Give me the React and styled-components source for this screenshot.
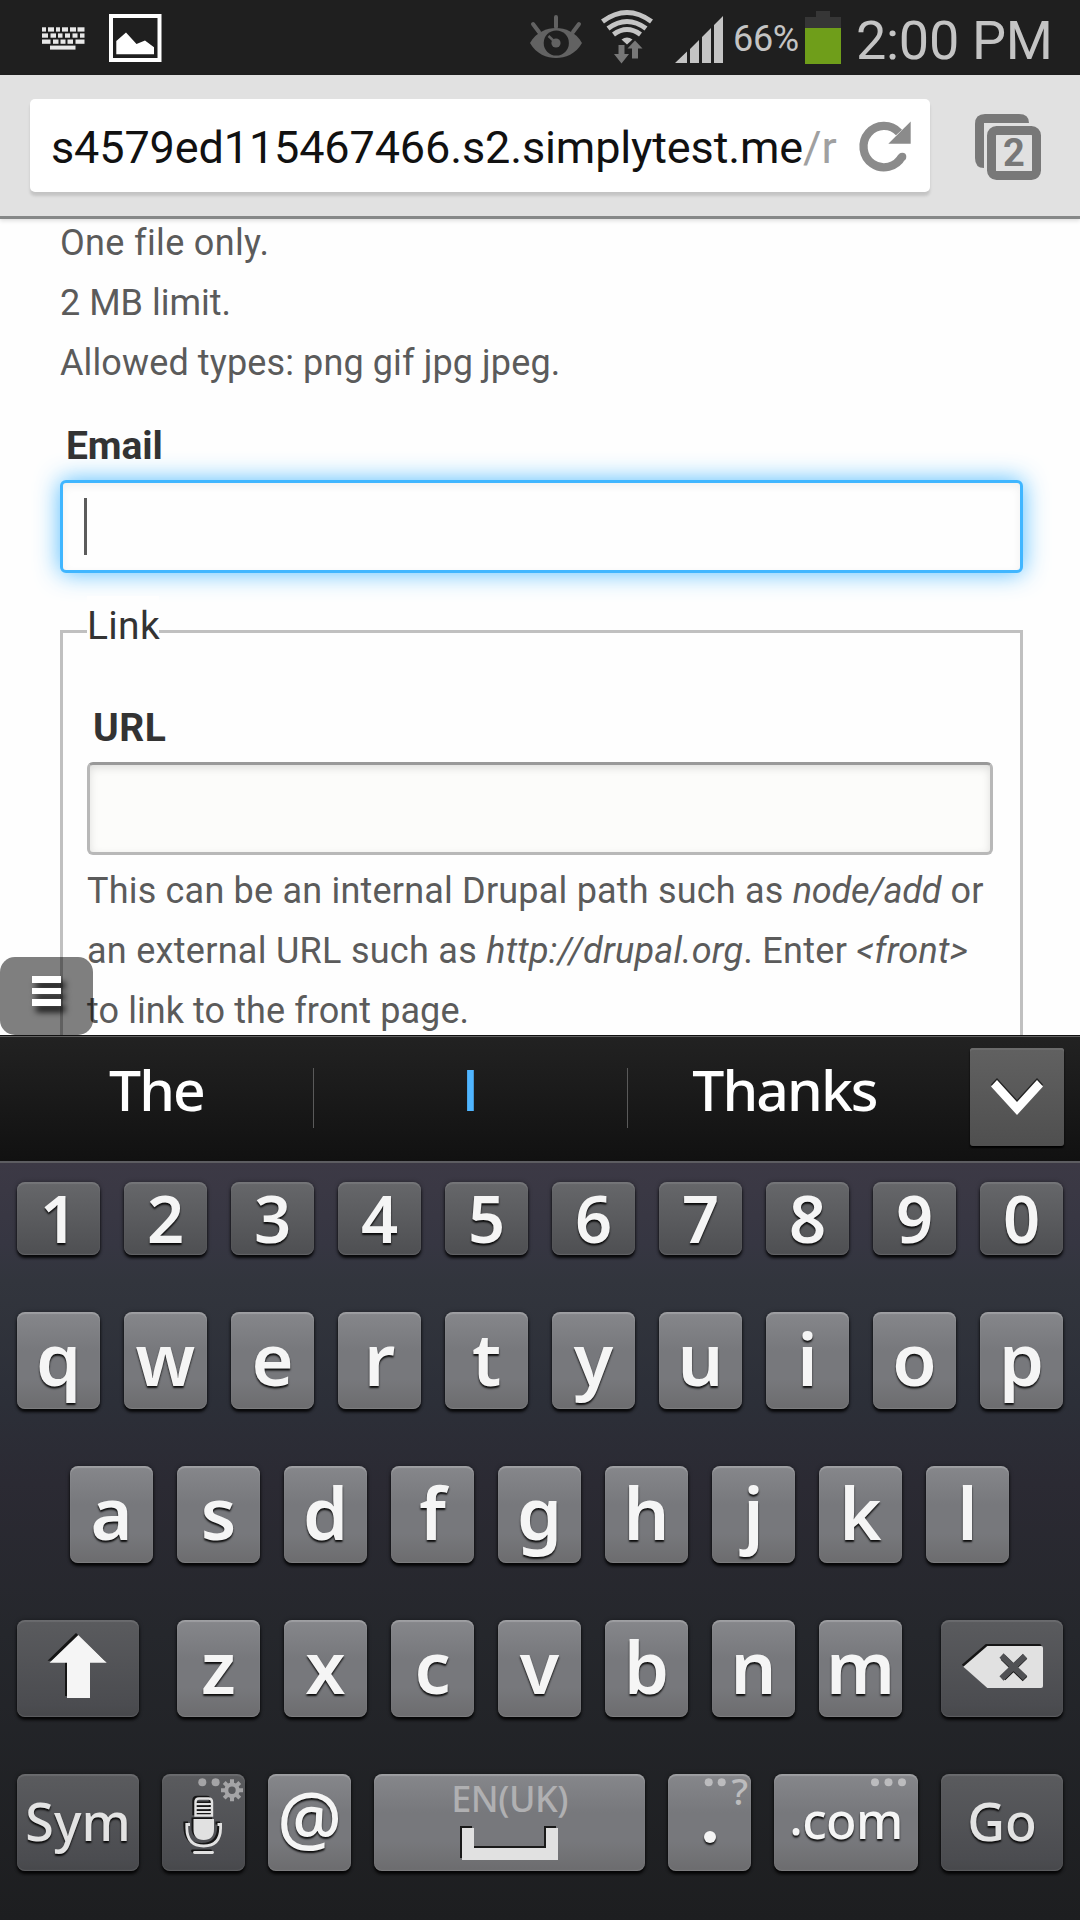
import React from "react";
import styled, { createGlobalStyle, css } from "styled-components";

const Global = createGlobalStyle`
  html, body { margin: 0; padding: 0; background: #fefefe; }
  * { box-sizing: border-box; }
`;

const Screen = styled.div`
  position: relative;
  width: 1080px;
  height: 1920px;
  overflow: hidden;
  display: flex;
  flex-direction: column;
  background: #fefefe;
  font-family: Roboto, "Liberation Sans", sans-serif;
`;

/* ---------- status bar ---------- */
const StatusBar = styled.div`
  height: 75px;
  flex: none;
  background: #1f1f1f;
  display: flex;
  align-items: flex-start;
  justify-content: space-between;
  color: #c4c4c4;
`;
const StatusGroup = styled.div`
  display: flex;
  height: 75px;
`;
const Percent = styled.span`
  width: 72px;
  font-size: 36px;
  line-height: 79px;
  letter-spacing: -0.3px;
  white-space: nowrap;
`;
const Clock = styled.span`
  width: 225px;
  padding-left: 1px;
  font-size: 54px;
  line-height: 81px;
  letter-spacing: -0.3px;
  white-space: nowrap;
`;

/* ---------- browser toolbar ---------- */
const Toolbar = styled.div`
  position: relative;
  z-index: 1;
  height: 144px;
  flex: none;
  display: flex;
  background: #e1e1e1;
  border-bottom: 3px solid #868888;
  box-shadow: 0 2px 4px rgba(0, 0, 0, 0.12);
  padding: 24px 0 0 30px;
`;
const AddressBox = styled.div`
  width: 900px;
  height: 93px;
  border-radius: 5px;
  background: #fff;
  box-shadow: 0 4px 3px rgba(0, 0, 0, 0.13);
  display: flex;
`;
const Address = styled.div`
  width: 811px;
  padding: 2px 0 0 21px;
  font-size: 45px;
  line-height: 93px;
  letter-spacing: -0.13px;
  white-space: nowrap;
  color: #111;
`;
const AddressPath = styled.span`
  color: #a0a0a0;
`;
const TabCount = styled.div`
  display: flex;
  padding-left: 40px;
`;

/* ---------- page ---------- */
const Page = styled.main`
  height: 816px;
  flex: none;
  overflow: hidden;
  padding: 0 57px 0 60px;
`;
const Description = styled.div`
  margin-top: ${(p) => p.$top}px;
  font-size: 36px;
  line-height: 60px;
  color: #5b5b5b;
  white-space: nowrap;
`;
const Line = styled.div`
  letter-spacing: ${(p) => p.$track || 0}px;
`;
const Term = styled.em`
  letter-spacing: ${(p) => p.$track || 0}px;
`;
const Label = styled.label`
  display: block;
  margin-top: ${(p) => p.$top}px;
  padding-left: 6px;
  margin-bottom: 4px;
  font-size: 39px;
  line-height: 60px;
  font-weight: 700;
  letter-spacing: ${(p) => p.$track}px;
  color: #333;
`;
const Field = styled.div`
  height: 93px;
  border: 3px solid #b8b8b8;
  border-top-color: #999;
  border-radius: 6px;
  background: #fcfcfa;
  box-shadow: inset 0 3px 9px rgba(0, 0, 0, 0.12);
  padding: 15px 21px;
  ${(p) =>
    p.$focused &&
    css`
      border-color: #40b6ff;
      background: #fefefe;
      box-shadow: 0 0 24px rgba(64, 182, 255, 0.9), inset 0 3px 9px rgba(0, 0, 0, 0.06);
    `}
`;
const Caret = styled.div`
  width: 3px;
  height: 57px;
  background: #5c5c5c;
`;
const FieldGroup = styled.section`
  margin-top: 57px;
  height: 500px;
  border: 3px solid #c0c0c0;
  padding: 0 27px 0 24px;
`;
const Legend = styled.div`
  width: 72px;
  margin-top: -37px;
  background: #fefefe;
  font-size: 39px;
  line-height: 60px;
  letter-spacing: 0.3px;
  color: #333;
`;
const MenuHandle = styled.button`
  position: absolute;
  left: 0;
  top: 957px;
  width: 93px;
  height: 78px;
  border: 0;
  border-radius: 15px;
  background: rgba(0, 0, 0, 0.5);
  padding: 19px 32px;
  display: flex;
  flex-direction: column;
  gap: 5px;
`;
const MenuBar = styled.i`
  width: 29px;
  height: 6.6px;
  background: #fff;
  box-shadow: 4px 6px 6px rgba(0, 0, 0, 0.85);
`;

/* ---------- keyboard ---------- */
const Suggestions = styled.div`
  height: 128px;
  flex: none;
  display: flex;
  border-top: 1px solid #111;
  border-bottom: 2px solid #5d5d61;
  box-shadow: inset 0 1px 0 #626262;
  background: linear-gradient(#222, #111);
`;
const Suggestion = styled.div`
  width: ${(p) => p.$w}px;
  text-align: center;
  font-family: ${(p) => (p.$active ? `"Open Sans"` : `"Noto Sans"`)}, sans-serif;
  font-size: 57px;
  font-weight: ${(p) => (p.$active ? 600 : 530)};
  line-height: 107px;
  letter-spacing: ${(p) => p.$track || 0}px;
  color: ${(p) => (p.$active ? "#4fb5ff" : "#fff")};
`;
const Divider = styled.div`
  width: 1px;
  height: 60px;
  margin-top: 32px;
  background: #5a5a5a;
`;
const Collapse = styled.button`
  width: 94px;
  height: 98px;
  margin: 12px 16px 0 auto;
  padding: 0;
  border: 0;
  border-radius: 3px;
  background: linear-gradient(#616161, #4f4f4f);
  box-shadow: inset 0 2px 0 #6b6b6b, 0 2px 2px #000;
`;
const ChevronIcon = styled.svg`
  display: block;
`;
const Keyboard = styled.div`
  flex: 1;
  display: flex;
  flex-direction: column;
  gap: 57px;
  padding: 19px 17px 0;
  background: linear-gradient(#3c3945 0, #363642 80px, #32353d 118px, #2c2f38 240px, #2b2a33 320px, #25272c 470px, #1d1e20 757px);
  font-family: "Noto Sans", "Open Sans", sans-serif;
`;
const KeyRow = styled.div`
  display: flex;
  gap: ${(p) => p.$gap || 24}px;
  padding-left: ${(p) => p.$indent || 0}px;
`;
const tones = {
  light: "linear-gradient(#86878b, #77787c 40%, #77787c 70%, #6c6c6e)",
  number: "linear-gradient(#66676a, #4e4f52)",
  dark: "linear-gradient(#5a5b5e, #4b4c50 88%, #47484b)",
};
const KeyCap = styled.div`
  position: relative;
  flex: none;
  width: ${(p) => p.$w || 83}px;
  height: ${(p) => p.$h || 97}px;
  margin: ${(p) => p.$margin || "0"};
  border-radius: 8px;
  background: ${(p) => tones[p.$tone || "light"]};
  box-shadow: inset 0 2px 1px rgba(255, 255, 255, ${(p) => (p.$tone ? 0.1 : 0.2)}),
    inset 0 -1px 1px rgba(255, 255, 255, 0.12), 0 3px 3px rgba(0, 0, 0, 0.85), 0 0 4px rgba(0, 0, 0, 0.35);
  display: flex;
  justify-content: center;
  white-space: nowrap;
  color: ${(p) => (p.$tone === "dark" ? "#e3e3e3" : "#f5f5f5")};
  font-size: ${(p) => p.$size || 72}px;
  font-weight: ${(p) => p.$weight || 560};
  line-height: ${(p) => p.$line || 93}px;
  letter-spacing: ${(p) => p.$track || 0}px;
  text-shadow: 0 2px 2px rgba(0, 0, 0, 0.9);
`;
const Hint = styled.span`
  position: absolute;
  right: ${(p) => p.$right}px;
  top: ${(p) => p.$top}px;
  font-size: ${(p) => p.$size || 36}px;
  line-height: 36px;
  font-weight: 500;
  letter-spacing: ${(p) => p.$track || 0}px;
  color: ${(p) => p.$color || "#bcbcbe"};
  text-shadow: none;
`;
const Overlay = styled.svg`
  position: absolute;
  inset: 0;
`;
const RaisedDot = styled.span`
  position: relative;
  top: -4px;
`;
const RoundDot = styled.span`
  width: 12px;
  height: 12px;
  margin: 57px 0 0 0;
  border-radius: 6px;
  background: #f5f5f5;
  color: transparent;
  font-size: 10px;
  line-height: 10px;
  text-align: center;
  text-shadow: none;
  box-shadow: 0 2px 2px rgba(0, 0, 0, 0.85);
`;

const keyboardRows = [
  [[42, 4], [48, 6], [56, 4], [62, 6], [70, 6], [77.5, 7]],
  [[42, 6], [50.5, 5.5], [58, 4.5], [65, 5], [72.5, 5], [80, 4.5]],
  [[42, 8.5], [53, 5.5], [60.5, 5], [67.5, 5.5], [75.5, 9]],
];

const NoticeIcons = () => (
  <svg width="180" height="75">
    <g fill="#e8e8e8">
      {keyboardRows.map((row, r) =>
        row.map(([x, w]) => <rect key={`${r}-${x}`} x={x} y={27.3 + r * 6.1} width={w} height="4.3" />)
      )}
      <rect x="50" y="45.6" width="25.5" height="4" />
    </g>
    <rect x="111" y="16" width="48.5" height="44" fill="none" stroke="#fff" strokeWidth="4" />
    <path d="M116.3 41L126 32.6 136.5 44 145 40.5 154 47.2V54.3H116.3Z" fill="#fff" />
  </svg>
);

const StatusIcons = () => (
  <svg width="210" height="75" viewBox="523 0 210 75">
    <g fill="none" stroke="#626262">
      <path d="M556 17V27M533 24L539 32M579 24L573 32" strokeWidth="4" strokeLinecap="round" />
      <path d="M530 43C536 32 547 28 556 28S576 32 582 43C576 54 565 58 556 58S536 54 530 43Z" fill="#626262" stroke="none" />
      <circle cx="556.3" cy="43" r="12.6" fill="#1f1f1f" stroke="none" />
      <circle cx="556" cy="43" r="4.6" fill="#626262" stroke="none" />
      <path d="M548.5 36L555 42" strokeWidth="2.4" />
    </g>
    <g fill="none" stroke="#c4c4c4" strokeWidth="5">
      <path d="M602.5 21.5Q627 3.5 651.5 21.5" />
      <path d="M608 28.5Q627 14.5 646 28.5" />
      <path d="M613.5 34.5Q627 24.5 640.5 34.5" />
    </g>
    <path d="M621.5 39.5Q627 35.5 632.5 39.5L627 44.5Z" fill="#c4c4c4" />
    <path d="M618.5 45h6v9h4.5l-7.5 9.5-7.5-9.500h4.500ZM632 58.5v-10h-4.500l7.500-8 7.500 8h-4.500v10Z" fill="#777" />
    <path d="M675 63L687 51.5V63ZM690 49L699 40V63H690ZM702 37L711 28V63H702ZM714 25L723 16V63H714Z" fill="#c4c4c4" />
  </svg>
);

const Battery = () => (
  <svg width="50" height="75" viewBox="805 0 50 75">
    <path d="M816 11H830V17H841V28H805V17H816Z" fill="#363636" />
    <rect x="805" y="28" width="36" height="36" fill="#6f9e1a" />
  </svg>
);

const Refresh = () => (
  <svg width="70" height="93" viewBox="841 99 70 93">
    <path d="M902 156.500A20.500 20.700 0 1 1 899 132.500" fill="none" stroke="#8b8b8b" strokeWidth="8.300" />
    <circle cx="902.300" cy="156.700" r="4" fill="#8b8b8b" />
    <path d="M910.700 121.500V143.700H888.300Z" fill="#8b8b8b" />
  </svg>
);

const Tabs = () => (
  <svg width="72" height="93" viewBox="970 99 72 93">
    <path d="M1029 123H984V168Q975 168 975 158V124Q975 114 985 114H1019Q1029 114 1029 123Z" fill="#787878" />
    <rect x="991.5" y="130.5" width="45" height="45" rx="5" fill="#e1e1e1" stroke="#787878" strokeWidth="9" />
    <text x="1014" y="166" textAnchor="middle" fontFamily="Roboto" fontWeight="700" fontSize="38" fill="#787878">2</text>
  </svg>
);

const Chevron = () => (
  <ChevronIcon width="94" height="98">
    <path d="M21 36.5L27 30 47 52 67 30 73 36.5 47 65Z" fill="#222" />
    <path d="M21 38.5L27 32 47 54 67 32 73 38.5 47 67Z" fill="#fff" />
  </ChevronIcon>
);

const Shift = () => (
  <Overlay width="122" height="97">
    <path d="M61 15L90 42.7H73V78H50V42.7H32.5Z" fill="#151515" transform="translate(-2 -2)" />
    <path d="M61.3 15L89.7 42.7H73V78H50V42.7H32.5Z" fill="#f5f5f5" />
  </Overlay>
);

const Backspace = () => (
  <Overlay width="122" height="97">
    <path d="M22.3 46.7L46.3 26H100Q102 26 102 28V66Q102 68 100 68H46.3Z" fill="#151515" transform="translate(-1.5 -2)" />
    <path d="M22.3 46.7L46.3 26H100Q102 26 102 28V66Q102 68 100 68H46.3Z" fill="#e1e1e1" />
    <path d="M62 37.5L84 59M84 36.5L62 58" stroke="#151515" strokeWidth="6.5" />
    <path d="M60.500 35.500L84 58M84 36L60.500 58.500" stroke="#505154" strokeWidth="6" />
  </Overlay>
);

const MicShape = ({ color }) => (
  <g fill="none" stroke={color}>
    <path d="M33.5 41.5V28Q33.5 24.5 37 24.5H46.5Q50 24.5 50 28V41.5Z" strokeWidth="2.4" />
    <path d="M34 30H49.5M34 34H49.5M34 38H49.5" strokeWidth="2" />
    <path d="M31.5 45H52V55Q52 66 41.7 66T31.5 55Z" fill={color} stroke="none" />
    <path d="M28 50.5H24.8V54Q25 72 41.7 72T58.6 54V50.5H55.5" strokeWidth="2.8" />
    <path d="M32.5 78.5H50.5" strokeWidth="2.8" strokeLinecap="round" />
  </g>
);

const Mic = () => (
  <Overlay width="83" height="97">
    <g transform="translate(-2 -1.5)"><MicShape color="#151515" /></g>
    <MicShape color="#e1e1e1" />
    <circle cx="40.3" cy="8.3" r="4" fill="#a4a4a6" />
    <circle cx="53.6" cy="8.3" r="4" fill="#a4a4a6" />
    <g transform="translate(70 16.3)" stroke="#a4a4a6" fill="none">
      <circle r="5.7" strokeWidth="4" />
      {[0, 45, 90, 135].map((a) => (
        <path key={a} d="M0 -11V-6.5M0 6.5V11" strokeWidth="4" transform={`rotate(${a})`} />
      ))}
    </g>
  </Overlay>
);

const Space = () => (
  <Overlay width="271" height="97">
    <path d="M86 52H98V72H170V52H182V84H86Z" fill="#1a1a1a" />
    <path d="M88 54H100V74H172V54H184V86H88Z" fill="#e1e1e1" />
  </Overlay>
);

const Dots = ({ at, width }) => (
  <Overlay width={width} height="97">
    {at.map((x) => <circle key={x} cx={x} cy="8.3" r="4" fill="#bcbcbe" />)}
  </Overlay>
);

export default function App() {
  return (
    <Screen>
      <Global />
      <StatusBar>
        <NoticeIcons />
        <StatusGroup>
          <StatusIcons />
          <Percent>66%</Percent>
          <Battery />
          <Clock>2:00 PM</Clock>
        </StatusGroup>
      </StatusBar>
      <Toolbar>
        <AddressBox>
          <Address>
            s4579ed115467466.s2.simplytest.me<AddressPath>/r</AddressPath>
          </Address>
          <Refresh />
        </AddressBox>
        <TabCount><Tabs /></TabCount>
      </Toolbar>
      <Page>
        <Description $top={-6}>
          <Line $track={0.35}>One file only.</Line>
          <Line>2 MB limit.</Line>
          <Line $track={0.12}>Allowed types: png gif jpg jpeg.</Line>
        </Description>
        <Label $top={23} $track={-0.1}>Email</Label>
        <Field $focused><Caret /></Field>
        <FieldGroup>
          <Legend>Link</Legend>
          <Label $top={42} $track={0.5}>URL</Label>
          <Field />
          <Description $top={6}>
            <Line $track={0.2}>
              This can be an internal Drupal path such as <Term $track={-0.2}>node/add</Term> or
            </Line>
            <Line $track={0.28}>
              an external URL such as <Term $track={0.22}>http://drupal.org</Term>. Enter <Term $track={0.2}>&lt;front&gt;</Term>
            </Line>
            <Line $track={0.08}>to link to the front page.</Line>
          </Description>
        </FieldGroup>
      </Page>
      <MenuHandle aria-label="Menu"><MenuBar /><MenuBar /><MenuBar /></MenuHandle>
      <Suggestions>
        <Suggestion $w={313} $track={-1.9}>The</Suggestion>
        <Divider />
        <Suggestion $w={313} $active>I</Suggestion>
        <Divider />
        <Suggestion $w={313} $track={-1.9}>Thanks</Suggestion>
        <Collapse aria-label="Hide"><Chevron /></Collapse>
      </Suggestions>
      <Keyboard>
        <KeyRow>
          {[..."1234567890"].map((c) => (
            <KeyCap key={c} $tone="number" $h={73} $size={65} $line={72}>{c}</KeyCap>
          ))}
        </KeyRow>
        <KeyRow>{[..."qwertyuiop"].map((c) => <KeyCap key={c}>{c}</KeyCap>)}</KeyRow>
        <KeyRow $indent={53}>{[..."asdfghjkl"].map((c) => <KeyCap key={c}>{c}</KeyCap>)}</KeyRow>
        <KeyRow>
          <KeyCap $w={122} $tone="dark" $margin="0 14px 0 0"><Shift /></KeyCap>
          {[..."zxcvbnm"].map((c) => <KeyCap key={c}>{c}</KeyCap>)}
          <KeyCap $w={122} $tone="dark" $margin="0 0 0 15px"><Backspace /></KeyCap>
        </KeyRow>
        <KeyRow $gap={23}>
          <KeyCap $w={122} $tone="dark" $size={52} $line={94} $weight={480}>Sym</KeyCap>
          <KeyCap $tone="dark"><Mic /></KeyCap>
          <KeyCap $size={72} $line={86} $weight={520}>@</KeyCap>
          <KeyCap $w={271}>
            <Space />
            <Hint $right={77} $top={7} $track={-0.5} $color="#b0b0b2">EN(UK)</Hint>
          </KeyCap>
          <KeyCap>
            <RoundDot>.</RoundDot>
            <Dots at={[40.7, 53.7]} width="83" />
            <Hint $right={3} $top={-1} $size={37}>?</Hint>
          </KeyCap>
          <KeyCap $w={144} $size={50} $line={93} $weight={510} $track={-0.6}>
            <RaisedDot>.</RaisedDot>com
            <Dots at={[101, 114.5, 128]} width="144" />
          </KeyCap>
          <KeyCap $w={122} $tone="dark" $size={52} $line={94} $weight={480}>Go</KeyCap>
        </KeyRow>
      </Keyboard>
    </Screen>
  );
}
